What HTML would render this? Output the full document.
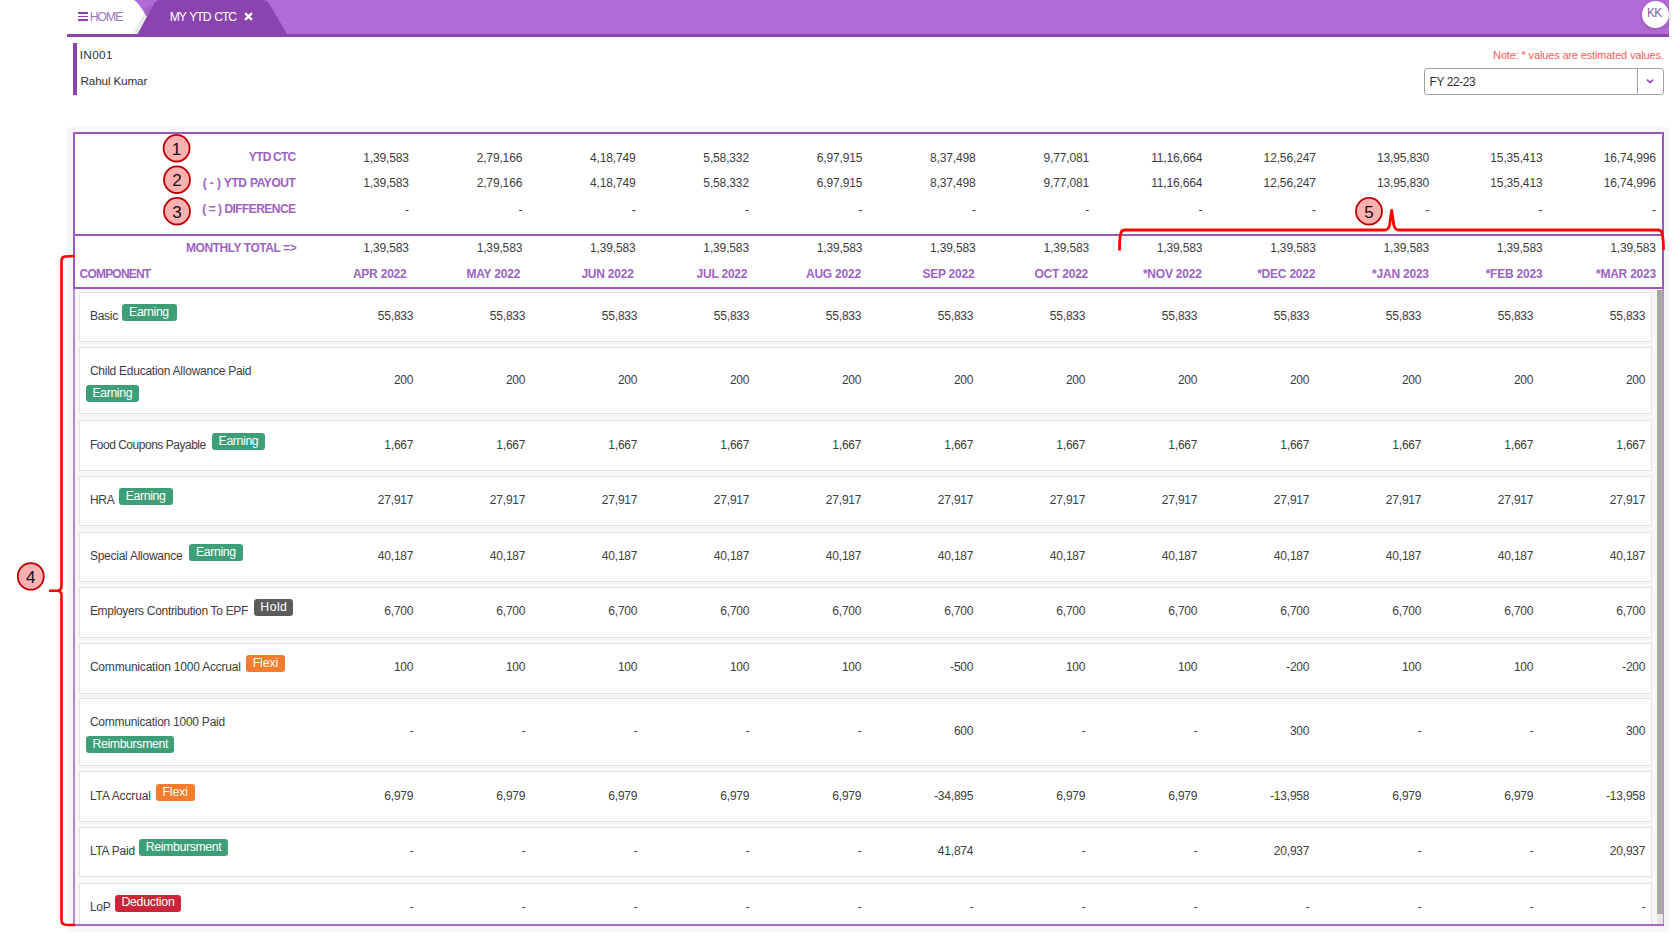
<!DOCTYPE html><html><head><meta charset="utf-8"><style>
html,body{margin:0;padding:0;width:1680px;height:945px;overflow:hidden;background:#fff;}
body{position:relative;font-family:"Liberation Sans", sans-serif;}
.t{position:absolute;white-space:nowrap;}
.a{position:absolute;}
</style></head><body>
<div class="a" style="left:67px;top:0;width:1602px;height:34px;background:#b26bd6;"></div>
<div class="a" style="left:67px;top:34px;width:1602px;height:3px;background:#8b44ae;"></div>
<svg class="a" style="left:0;top:0" width="1680" height="40"><defs><linearGradient id="sh" x1="0" x2="1"><stop offset="0" stop-color="#000" stop-opacity="0"/><stop offset="1" stop-color="#000" stop-opacity="0.12"/></linearGradient></defs><path d="M67,0 L134,0 Q138,2 147,17 L157,34 L67,34 Z" fill="#fff"/><filter id="bl" x="-50%" y="-50%" width="200%" height="200%"><feGaussianBlur stdDeviation="1.6"/></filter><path d="M136,34 L151,6 L149,6 L134,34 Z" fill="#000" fill-opacity="0.22" filter="url(#bl)"/><path d="M137.5,34 L154,3.5 Q156,0 160,0 L263,0 Q267,0 269,3.5 L287,34 Z" fill="#8b44ae"/></svg>
<div class="a" style="left:78px;top:12.2px;width:10px;height:1.6px;background:#8b44ae;"></div>
<div class="a" style="left:78px;top:15.7px;width:10px;height:1.6px;background:#8b44ae;"></div>
<div class="a" style="left:78px;top:19.3px;width:10px;height:1.6px;background:#8b44ae;"></div>
<div class="t" style="left:89.70px;top:11.17px;font-size:12.2px;line-height:12.2px;color:#9a76bf;font-weight:normal;letter-spacing:-0.95px;">HOME</div>
<div class="t" style="left:169.80px;top:11.07px;font-size:12.2px;line-height:12.2px;color:#fff;font-weight:normal;letter-spacing:-1.1px;word-spacing:1.6px;">MY YTD CTC</div>
<svg class="a" style="left:243.5px;top:12px" width="10" height="10"><path d="M1.8,1.8 L7.2,7.2 M7.2,1.8 L1.8,7.2" stroke="#fff" stroke-width="2.4" stroke-linecap="round"/></svg>
<div class="a" style="left:1641.5px;top:0.5px;width:27.5px;height:27.5px;border-radius:50%;background:#fff;box-shadow:0 1px 4px rgba(80,20,110,0.35);"></div>
<div class="t" style="left:1647.00px;top:7.44px;font-size:12px;line-height:12px;color:#8a5aa8;font-weight:normal;letter-spacing:-0.8px;">KK</div>
<div class="a" style="left:73px;top:43px;width:4px;height:52px;background:#8b44ae;"></div>
<div class="t" style="left:79.80px;top:49.51px;font-size:11.8px;line-height:11.8px;color:#333;font-weight:normal;letter-spacing:0.3px;">IN001</div>
<div class="t" style="left:80.50px;top:76.31px;font-size:11.8px;line-height:11.8px;color:#333;font-weight:normal;letter-spacing:-0.2px;">Rahul Kumar</div>
<div class="t" style="right:16.20px;top:49.69px;font-size:11px;line-height:11px;color:#ff5a5a;font-weight:normal;letter-spacing:-0.15px;">Note: * values are estimated values.</div>
<div class="a" style="left:1424px;top:68px;width:238px;height:25px;border:1px solid #a0a0a0;border-radius:3px;background:#fff;"></div>
<div class="a" style="left:1637px;top:69px;width:1px;height:25px;background:#a0a0a0;"></div>
<svg class="a" style="left:1645px;top:78px" width="10" height="7"><path d="M2,1.6 L5,4.6 L8,1.6" stroke="#9550bf" stroke-width="1.7" fill="none"/></svg>
<div class="t" style="left:1429.60px;top:75.54px;font-size:12px;line-height:12px;color:#333;font-weight:normal;letter-spacing:-0.45px;">FY 22-23</div>
<div class="a" style="left:67px;top:126.5px;width:1602px;height:805px;background:#f7f7f7;"></div>
<div class="a" style="left:73px;top:132px;width:1591px;height:157px;background:#fff;"></div>
<div class="a" style="left:73px;top:132px;width:1591px;height:2px;background:#9b59c0;"></div>
<div class="a" style="left:73px;top:132px;width:2px;height:157px;background:#9b59c0;"></div>
<div class="a" style="left:1662px;top:132px;width:2px;height:157px;background:#9b59c0;"></div>
<div class="a" style="left:73px;top:233.5px;width:1591px;height:2px;background:#9b59c0;"></div>
<div class="a" style="left:73px;top:287px;width:1591px;height:2px;background:#9b59c0;"></div>
<div class="a" style="left:73px;top:289px;width:1.6px;height:637px;background:#b58ad2;"></div>
<div class="a" style="left:1662.4px;top:289px;width:1.6px;height:637px;background:#b58ad2;"></div>
<div class="a" style="left:73px;top:924.4px;width:1591px;height:1.6px;background:#a76ac9;"></div>
<div class="t" style="right:1384.60px;top:151.04px;font-size:12px;line-height:12px;color:#9d62c2;font-weight:bold;letter-spacing:-0.78px;word-spacing:0px;">YTD CTC</div>
<div class="t" style="right:1384.60px;top:176.94px;font-size:12px;line-height:12px;color:#9d62c2;font-weight:bold;letter-spacing:-0.45px;word-spacing:0.7px;">( - ) YTD PAYOUT</div>
<div class="t" style="right:1384.60px;top:202.84px;font-size:12px;line-height:12px;color:#9d62c2;font-weight:bold;letter-spacing:-0.58px;word-spacing:0.25px;">( = ) DIFFERENCE</div>
<div class="t" style="right:1383.80px;top:241.94px;font-size:12px;line-height:12px;color:#9d62c2;font-weight:bold;letter-spacing:-0.45px;">MONTHLY TOTAL =&gt;</div>
<div class="t" style="left:79.50px;top:267.74px;font-size:12px;line-height:12px;color:#9d62c2;font-weight:bold;letter-spacing:-0.79px;">COMPONENT</div>
<div class="t" style="right:1271.15px;top:151.54px;font-size:12px;line-height:12px;color:#3d3d3d;font-weight:normal;letter-spacing:-0.14px;">1,39,583</div>
<div class="t" style="right:1271.15px;top:177.44px;font-size:12px;line-height:12px;color:#3d3d3d;font-weight:normal;letter-spacing:-0.14px;">1,39,583</div>
<div class="t" style="right:1271.00px;top:203.84px;font-size:12px;line-height:12px;color:#3d3d3d;font-weight:normal;letter-spacing:0px;">-</div>
<div class="t" style="right:1271.15px;top:242.14px;font-size:12px;line-height:12px;color:#3d3d3d;font-weight:normal;letter-spacing:-0.14px;">1,39,583</div>
<div class="t" style="right:1273.50px;top:267.84px;font-size:12px;line-height:12px;color:#9d62c2;font-weight:bold;letter-spacing:-0.22px;">APR 2022</div>
<div class="t" style="right:1157.79px;top:151.54px;font-size:12px;line-height:12px;color:#3d3d3d;font-weight:normal;letter-spacing:-0.14px;">2,79,166</div>
<div class="t" style="right:1157.79px;top:177.44px;font-size:12px;line-height:12px;color:#3d3d3d;font-weight:normal;letter-spacing:-0.14px;">2,79,166</div>
<div class="t" style="right:1157.64px;top:203.84px;font-size:12px;line-height:12px;color:#3d3d3d;font-weight:normal;letter-spacing:0px;">-</div>
<div class="t" style="right:1157.79px;top:242.14px;font-size:12px;line-height:12px;color:#3d3d3d;font-weight:normal;letter-spacing:-0.14px;">1,39,583</div>
<div class="t" style="right:1159.91px;top:267.84px;font-size:12px;line-height:12px;color:#9d62c2;font-weight:bold;letter-spacing:-0.22px;">MAY 2022</div>
<div class="t" style="right:1044.43px;top:151.54px;font-size:12px;line-height:12px;color:#3d3d3d;font-weight:normal;letter-spacing:-0.14px;">4,18,749</div>
<div class="t" style="right:1044.43px;top:177.44px;font-size:12px;line-height:12px;color:#3d3d3d;font-weight:normal;letter-spacing:-0.14px;">4,18,749</div>
<div class="t" style="right:1044.28px;top:203.84px;font-size:12px;line-height:12px;color:#3d3d3d;font-weight:normal;letter-spacing:0px;">-</div>
<div class="t" style="right:1044.43px;top:242.14px;font-size:12px;line-height:12px;color:#3d3d3d;font-weight:normal;letter-spacing:-0.14px;">1,39,583</div>
<div class="t" style="right:1046.32px;top:267.84px;font-size:12px;line-height:12px;color:#9d62c2;font-weight:bold;letter-spacing:-0.22px;">JUN 2022</div>
<div class="t" style="right:931.07px;top:151.54px;font-size:12px;line-height:12px;color:#3d3d3d;font-weight:normal;letter-spacing:-0.14px;">5,58,332</div>
<div class="t" style="right:931.07px;top:177.44px;font-size:12px;line-height:12px;color:#3d3d3d;font-weight:normal;letter-spacing:-0.14px;">5,58,332</div>
<div class="t" style="right:930.92px;top:203.84px;font-size:12px;line-height:12px;color:#3d3d3d;font-weight:normal;letter-spacing:0px;">-</div>
<div class="t" style="right:931.07px;top:242.14px;font-size:12px;line-height:12px;color:#3d3d3d;font-weight:normal;letter-spacing:-0.14px;">1,39,583</div>
<div class="t" style="right:932.73px;top:267.84px;font-size:12px;line-height:12px;color:#9d62c2;font-weight:bold;letter-spacing:-0.22px;">JUL 2022</div>
<div class="t" style="right:817.71px;top:151.54px;font-size:12px;line-height:12px;color:#3d3d3d;font-weight:normal;letter-spacing:-0.14px;">6,97,915</div>
<div class="t" style="right:817.71px;top:177.44px;font-size:12px;line-height:12px;color:#3d3d3d;font-weight:normal;letter-spacing:-0.14px;">6,97,915</div>
<div class="t" style="right:817.56px;top:203.84px;font-size:12px;line-height:12px;color:#3d3d3d;font-weight:normal;letter-spacing:0px;">-</div>
<div class="t" style="right:817.71px;top:242.14px;font-size:12px;line-height:12px;color:#3d3d3d;font-weight:normal;letter-spacing:-0.14px;">1,39,583</div>
<div class="t" style="right:819.14px;top:267.84px;font-size:12px;line-height:12px;color:#9d62c2;font-weight:bold;letter-spacing:-0.22px;">AUG 2022</div>
<div class="t" style="right:704.35px;top:151.54px;font-size:12px;line-height:12px;color:#3d3d3d;font-weight:normal;letter-spacing:-0.14px;">8,37,498</div>
<div class="t" style="right:704.35px;top:177.44px;font-size:12px;line-height:12px;color:#3d3d3d;font-weight:normal;letter-spacing:-0.14px;">8,37,498</div>
<div class="t" style="right:704.20px;top:203.84px;font-size:12px;line-height:12px;color:#3d3d3d;font-weight:normal;letter-spacing:0px;">-</div>
<div class="t" style="right:704.35px;top:242.14px;font-size:12px;line-height:12px;color:#3d3d3d;font-weight:normal;letter-spacing:-0.14px;">1,39,583</div>
<div class="t" style="right:705.55px;top:267.84px;font-size:12px;line-height:12px;color:#9d62c2;font-weight:bold;letter-spacing:-0.22px;">SEP 2022</div>
<div class="t" style="right:590.99px;top:151.54px;font-size:12px;line-height:12px;color:#3d3d3d;font-weight:normal;letter-spacing:-0.14px;">9,77,081</div>
<div class="t" style="right:590.99px;top:177.44px;font-size:12px;line-height:12px;color:#3d3d3d;font-weight:normal;letter-spacing:-0.14px;">9,77,081</div>
<div class="t" style="right:590.84px;top:203.84px;font-size:12px;line-height:12px;color:#3d3d3d;font-weight:normal;letter-spacing:0px;">-</div>
<div class="t" style="right:590.99px;top:242.14px;font-size:12px;line-height:12px;color:#3d3d3d;font-weight:normal;letter-spacing:-0.14px;">1,39,583</div>
<div class="t" style="right:591.96px;top:267.84px;font-size:12px;line-height:12px;color:#9d62c2;font-weight:bold;letter-spacing:-0.22px;">OCT 2022</div>
<div class="t" style="right:477.63px;top:151.54px;font-size:12px;line-height:12px;color:#3d3d3d;font-weight:normal;letter-spacing:-0.14px;">11,16,664</div>
<div class="t" style="right:477.63px;top:177.44px;font-size:12px;line-height:12px;color:#3d3d3d;font-weight:normal;letter-spacing:-0.14px;">11,16,664</div>
<div class="t" style="right:477.48px;top:203.84px;font-size:12px;line-height:12px;color:#3d3d3d;font-weight:normal;letter-spacing:0px;">-</div>
<div class="t" style="right:477.63px;top:242.14px;font-size:12px;line-height:12px;color:#3d3d3d;font-weight:normal;letter-spacing:-0.14px;">1,39,583</div>
<div class="t" style="right:478.37px;top:267.84px;font-size:12px;line-height:12px;color:#9d62c2;font-weight:bold;letter-spacing:-0.22px;">*NOV 2022</div>
<div class="t" style="right:364.27px;top:151.54px;font-size:12px;line-height:12px;color:#3d3d3d;font-weight:normal;letter-spacing:-0.14px;">12,56,247</div>
<div class="t" style="right:364.27px;top:177.44px;font-size:12px;line-height:12px;color:#3d3d3d;font-weight:normal;letter-spacing:-0.14px;">12,56,247</div>
<div class="t" style="right:364.12px;top:203.84px;font-size:12px;line-height:12px;color:#3d3d3d;font-weight:normal;letter-spacing:0px;">-</div>
<div class="t" style="right:364.27px;top:242.14px;font-size:12px;line-height:12px;color:#3d3d3d;font-weight:normal;letter-spacing:-0.14px;">1,39,583</div>
<div class="t" style="right:364.78px;top:267.84px;font-size:12px;line-height:12px;color:#9d62c2;font-weight:bold;letter-spacing:-0.22px;">*DEC 2022</div>
<div class="t" style="right:250.91px;top:151.54px;font-size:12px;line-height:12px;color:#3d3d3d;font-weight:normal;letter-spacing:-0.14px;">13,95,830</div>
<div class="t" style="right:250.91px;top:177.44px;font-size:12px;line-height:12px;color:#3d3d3d;font-weight:normal;letter-spacing:-0.14px;">13,95,830</div>
<div class="t" style="right:250.76px;top:203.84px;font-size:12px;line-height:12px;color:#3d3d3d;font-weight:normal;letter-spacing:0px;">-</div>
<div class="t" style="right:250.91px;top:242.14px;font-size:12px;line-height:12px;color:#3d3d3d;font-weight:normal;letter-spacing:-0.14px;">1,39,583</div>
<div class="t" style="right:251.19px;top:267.84px;font-size:12px;line-height:12px;color:#9d62c2;font-weight:bold;letter-spacing:-0.22px;">*JAN 2023</div>
<div class="t" style="right:137.55px;top:151.54px;font-size:12px;line-height:12px;color:#3d3d3d;font-weight:normal;letter-spacing:-0.14px;">15,35,413</div>
<div class="t" style="right:137.55px;top:177.44px;font-size:12px;line-height:12px;color:#3d3d3d;font-weight:normal;letter-spacing:-0.14px;">15,35,413</div>
<div class="t" style="right:137.40px;top:203.84px;font-size:12px;line-height:12px;color:#3d3d3d;font-weight:normal;letter-spacing:0px;">-</div>
<div class="t" style="right:137.55px;top:242.14px;font-size:12px;line-height:12px;color:#3d3d3d;font-weight:normal;letter-spacing:-0.14px;">1,39,583</div>
<div class="t" style="right:137.60px;top:267.84px;font-size:12px;line-height:12px;color:#9d62c2;font-weight:bold;letter-spacing:-0.22px;">*FEB 2023</div>
<div class="t" style="right:24.19px;top:151.54px;font-size:12px;line-height:12px;color:#3d3d3d;font-weight:normal;letter-spacing:-0.14px;">16,74,996</div>
<div class="t" style="right:24.19px;top:177.44px;font-size:12px;line-height:12px;color:#3d3d3d;font-weight:normal;letter-spacing:-0.14px;">16,74,996</div>
<div class="t" style="right:24.04px;top:203.84px;font-size:12px;line-height:12px;color:#3d3d3d;font-weight:normal;letter-spacing:0px;">-</div>
<div class="t" style="right:24.19px;top:242.14px;font-size:12px;line-height:12px;color:#3d3d3d;font-weight:normal;letter-spacing:-0.14px;">1,39,583</div>
<div class="t" style="right:24.01px;top:267.84px;font-size:12px;line-height:12px;color:#9d62c2;font-weight:bold;letter-spacing:-0.22px;">*MAR 2023</div>
<div class="a" style="left:1657px;top:290px;width:5.6px;height:624px;background:#a8a8a8;"></div>
<div class="a" style="left:1657px;top:914px;width:5.6px;height:10.4px;background:#e6e6e6;"></div>
<div class="a" style="left:79px;top:291.60px;width:1571px;height:48.45px;background:#fff;border:1px solid #e2e2e2;"></div>
<div class="t" style="left:89.90px;top:309.94px;font-size:12px;line-height:12px;color:#3d3d3d;font-weight:normal;letter-spacing:-0.25px;">Basic</div>
<div class="a" style="left:122.4px;top:303.70px;width:54.30px;height:17.3px;border-radius:3px;background:#3d9f77;"></div>
<div class="t" style="left:129.10px;top:305.69px;font-size:12.3px;line-height:12.3px;color:#fff;font-weight:normal;letter-spacing:-0.38px;">Earning</div>
<div class="t" style="right:1266.70px;top:309.94px;font-size:12px;line-height:12px;color:#3d3d3d;font-weight:normal;letter-spacing:-0.2px;">55,833</div>
<div class="t" style="right:1154.70px;top:309.94px;font-size:12px;line-height:12px;color:#3d3d3d;font-weight:normal;letter-spacing:-0.2px;">55,833</div>
<div class="t" style="right:1042.70px;top:309.94px;font-size:12px;line-height:12px;color:#3d3d3d;font-weight:normal;letter-spacing:-0.2px;">55,833</div>
<div class="t" style="right:930.70px;top:309.94px;font-size:12px;line-height:12px;color:#3d3d3d;font-weight:normal;letter-spacing:-0.2px;">55,833</div>
<div class="t" style="right:818.70px;top:309.94px;font-size:12px;line-height:12px;color:#3d3d3d;font-weight:normal;letter-spacing:-0.2px;">55,833</div>
<div class="t" style="right:706.70px;top:309.94px;font-size:12px;line-height:12px;color:#3d3d3d;font-weight:normal;letter-spacing:-0.2px;">55,833</div>
<div class="t" style="right:594.70px;top:309.94px;font-size:12px;line-height:12px;color:#3d3d3d;font-weight:normal;letter-spacing:-0.2px;">55,833</div>
<div class="t" style="right:482.70px;top:309.94px;font-size:12px;line-height:12px;color:#3d3d3d;font-weight:normal;letter-spacing:-0.2px;">55,833</div>
<div class="t" style="right:370.70px;top:309.94px;font-size:12px;line-height:12px;color:#3d3d3d;font-weight:normal;letter-spacing:-0.2px;">55,833</div>
<div class="t" style="right:258.70px;top:309.94px;font-size:12px;line-height:12px;color:#3d3d3d;font-weight:normal;letter-spacing:-0.2px;">55,833</div>
<div class="t" style="right:146.70px;top:309.94px;font-size:12px;line-height:12px;color:#3d3d3d;font-weight:normal;letter-spacing:-0.2px;">55,833</div>
<div class="t" style="right:34.70px;top:309.94px;font-size:12px;line-height:12px;color:#3d3d3d;font-weight:normal;letter-spacing:-0.2px;">55,833</div>
<div class="a" style="left:79px;top:347.10px;width:1571px;height:65.30px;background:#fff;border:1px solid #e2e2e2;"></div>
<div class="t" style="left:89.90px;top:364.94px;font-size:12px;line-height:12px;color:#3d3d3d;font-weight:normal;letter-spacing:-0.25px;">Child Education Allowance Paid</div>
<div class="a" style="left:85.7px;top:385.00px;width:53.30px;height:17.3px;border-radius:3px;background:#3d9f77;"></div>
<div class="t" style="left:92.40px;top:386.99px;font-size:12.3px;line-height:12.3px;color:#fff;font-weight:normal;letter-spacing:-0.38px;">Earning</div>
<div class="t" style="right:1266.70px;top:373.94px;font-size:12px;line-height:12px;color:#3d3d3d;font-weight:normal;letter-spacing:-0.2px;">200</div>
<div class="t" style="right:1154.70px;top:373.94px;font-size:12px;line-height:12px;color:#3d3d3d;font-weight:normal;letter-spacing:-0.2px;">200</div>
<div class="t" style="right:1042.70px;top:373.94px;font-size:12px;line-height:12px;color:#3d3d3d;font-weight:normal;letter-spacing:-0.2px;">200</div>
<div class="t" style="right:930.70px;top:373.94px;font-size:12px;line-height:12px;color:#3d3d3d;font-weight:normal;letter-spacing:-0.2px;">200</div>
<div class="t" style="right:818.70px;top:373.94px;font-size:12px;line-height:12px;color:#3d3d3d;font-weight:normal;letter-spacing:-0.2px;">200</div>
<div class="t" style="right:706.70px;top:373.94px;font-size:12px;line-height:12px;color:#3d3d3d;font-weight:normal;letter-spacing:-0.2px;">200</div>
<div class="t" style="right:594.70px;top:373.94px;font-size:12px;line-height:12px;color:#3d3d3d;font-weight:normal;letter-spacing:-0.2px;">200</div>
<div class="t" style="right:482.70px;top:373.94px;font-size:12px;line-height:12px;color:#3d3d3d;font-weight:normal;letter-spacing:-0.2px;">200</div>
<div class="t" style="right:370.70px;top:373.94px;font-size:12px;line-height:12px;color:#3d3d3d;font-weight:normal;letter-spacing:-0.2px;">200</div>
<div class="t" style="right:258.70px;top:373.94px;font-size:12px;line-height:12px;color:#3d3d3d;font-weight:normal;letter-spacing:-0.2px;">200</div>
<div class="t" style="right:146.70px;top:373.94px;font-size:12px;line-height:12px;color:#3d3d3d;font-weight:normal;letter-spacing:-0.2px;">200</div>
<div class="t" style="right:34.70px;top:373.94px;font-size:12px;line-height:12px;color:#3d3d3d;font-weight:normal;letter-spacing:-0.2px;">200</div>
<div class="a" style="left:79px;top:420.40px;width:1571px;height:48.45px;background:#fff;border:1px solid #e2e2e2;"></div>
<div class="t" style="left:89.90px;top:438.94px;font-size:12px;line-height:12px;color:#3d3d3d;font-weight:normal;letter-spacing:-0.48px;">Food Coupons Payable</div>
<div class="a" style="left:211.9px;top:432.70px;width:53.10px;height:17.3px;border-radius:3px;background:#3d9f77;"></div>
<div class="t" style="left:218.60px;top:434.69px;font-size:12.3px;line-height:12.3px;color:#fff;font-weight:normal;letter-spacing:-0.38px;">Earning</div>
<div class="t" style="right:1266.70px;top:438.94px;font-size:12px;line-height:12px;color:#3d3d3d;font-weight:normal;letter-spacing:-0.2px;">1,667</div>
<div class="t" style="right:1154.70px;top:438.94px;font-size:12px;line-height:12px;color:#3d3d3d;font-weight:normal;letter-spacing:-0.2px;">1,667</div>
<div class="t" style="right:1042.70px;top:438.94px;font-size:12px;line-height:12px;color:#3d3d3d;font-weight:normal;letter-spacing:-0.2px;">1,667</div>
<div class="t" style="right:930.70px;top:438.94px;font-size:12px;line-height:12px;color:#3d3d3d;font-weight:normal;letter-spacing:-0.2px;">1,667</div>
<div class="t" style="right:818.70px;top:438.94px;font-size:12px;line-height:12px;color:#3d3d3d;font-weight:normal;letter-spacing:-0.2px;">1,667</div>
<div class="t" style="right:706.70px;top:438.94px;font-size:12px;line-height:12px;color:#3d3d3d;font-weight:normal;letter-spacing:-0.2px;">1,667</div>
<div class="t" style="right:594.70px;top:438.94px;font-size:12px;line-height:12px;color:#3d3d3d;font-weight:normal;letter-spacing:-0.2px;">1,667</div>
<div class="t" style="right:482.70px;top:438.94px;font-size:12px;line-height:12px;color:#3d3d3d;font-weight:normal;letter-spacing:-0.2px;">1,667</div>
<div class="t" style="right:370.70px;top:438.94px;font-size:12px;line-height:12px;color:#3d3d3d;font-weight:normal;letter-spacing:-0.2px;">1,667</div>
<div class="t" style="right:258.70px;top:438.94px;font-size:12px;line-height:12px;color:#3d3d3d;font-weight:normal;letter-spacing:-0.2px;">1,667</div>
<div class="t" style="right:146.70px;top:438.94px;font-size:12px;line-height:12px;color:#3d3d3d;font-weight:normal;letter-spacing:-0.2px;">1,667</div>
<div class="t" style="right:34.70px;top:438.94px;font-size:12px;line-height:12px;color:#3d3d3d;font-weight:normal;letter-spacing:-0.2px;">1,667</div>
<div class="a" style="left:79px;top:475.90px;width:1571px;height:48.45px;background:#fff;border:1px solid #e2e2e2;"></div>
<div class="t" style="left:89.90px;top:493.94px;font-size:12px;line-height:12px;color:#3d3d3d;font-weight:normal;letter-spacing:-0.25px;">HRA</div>
<div class="a" style="left:119px;top:487.70px;width:54.00px;height:17.3px;border-radius:3px;background:#3d9f77;"></div>
<div class="t" style="left:125.70px;top:489.69px;font-size:12.3px;line-height:12.3px;color:#fff;font-weight:normal;letter-spacing:-0.38px;">Earning</div>
<div class="t" style="right:1266.70px;top:493.94px;font-size:12px;line-height:12px;color:#3d3d3d;font-weight:normal;letter-spacing:-0.2px;">27,917</div>
<div class="t" style="right:1154.70px;top:493.94px;font-size:12px;line-height:12px;color:#3d3d3d;font-weight:normal;letter-spacing:-0.2px;">27,917</div>
<div class="t" style="right:1042.70px;top:493.94px;font-size:12px;line-height:12px;color:#3d3d3d;font-weight:normal;letter-spacing:-0.2px;">27,917</div>
<div class="t" style="right:930.70px;top:493.94px;font-size:12px;line-height:12px;color:#3d3d3d;font-weight:normal;letter-spacing:-0.2px;">27,917</div>
<div class="t" style="right:818.70px;top:493.94px;font-size:12px;line-height:12px;color:#3d3d3d;font-weight:normal;letter-spacing:-0.2px;">27,917</div>
<div class="t" style="right:706.70px;top:493.94px;font-size:12px;line-height:12px;color:#3d3d3d;font-weight:normal;letter-spacing:-0.2px;">27,917</div>
<div class="t" style="right:594.70px;top:493.94px;font-size:12px;line-height:12px;color:#3d3d3d;font-weight:normal;letter-spacing:-0.2px;">27,917</div>
<div class="t" style="right:482.70px;top:493.94px;font-size:12px;line-height:12px;color:#3d3d3d;font-weight:normal;letter-spacing:-0.2px;">27,917</div>
<div class="t" style="right:370.70px;top:493.94px;font-size:12px;line-height:12px;color:#3d3d3d;font-weight:normal;letter-spacing:-0.2px;">27,917</div>
<div class="t" style="right:258.70px;top:493.94px;font-size:12px;line-height:12px;color:#3d3d3d;font-weight:normal;letter-spacing:-0.2px;">27,917</div>
<div class="t" style="right:146.70px;top:493.94px;font-size:12px;line-height:12px;color:#3d3d3d;font-weight:normal;letter-spacing:-0.2px;">27,917</div>
<div class="t" style="right:34.70px;top:493.94px;font-size:12px;line-height:12px;color:#3d3d3d;font-weight:normal;letter-spacing:-0.2px;">27,917</div>
<div class="a" style="left:79px;top:531.60px;width:1571px;height:48.45px;background:#fff;border:1px solid #e2e2e2;"></div>
<div class="t" style="left:89.90px;top:549.84px;font-size:12px;line-height:12px;color:#3d3d3d;font-weight:normal;letter-spacing:-0.25px;">Special Allowance</div>
<div class="a" style="left:189.3px;top:543.60px;width:53.80px;height:17.3px;border-radius:3px;background:#3d9f77;"></div>
<div class="t" style="left:196.00px;top:545.59px;font-size:12.3px;line-height:12.3px;color:#fff;font-weight:normal;letter-spacing:-0.38px;">Earning</div>
<div class="t" style="right:1266.70px;top:549.84px;font-size:12px;line-height:12px;color:#3d3d3d;font-weight:normal;letter-spacing:-0.2px;">40,187</div>
<div class="t" style="right:1154.70px;top:549.84px;font-size:12px;line-height:12px;color:#3d3d3d;font-weight:normal;letter-spacing:-0.2px;">40,187</div>
<div class="t" style="right:1042.70px;top:549.84px;font-size:12px;line-height:12px;color:#3d3d3d;font-weight:normal;letter-spacing:-0.2px;">40,187</div>
<div class="t" style="right:930.70px;top:549.84px;font-size:12px;line-height:12px;color:#3d3d3d;font-weight:normal;letter-spacing:-0.2px;">40,187</div>
<div class="t" style="right:818.70px;top:549.84px;font-size:12px;line-height:12px;color:#3d3d3d;font-weight:normal;letter-spacing:-0.2px;">40,187</div>
<div class="t" style="right:706.70px;top:549.84px;font-size:12px;line-height:12px;color:#3d3d3d;font-weight:normal;letter-spacing:-0.2px;">40,187</div>
<div class="t" style="right:594.70px;top:549.84px;font-size:12px;line-height:12px;color:#3d3d3d;font-weight:normal;letter-spacing:-0.2px;">40,187</div>
<div class="t" style="right:482.70px;top:549.84px;font-size:12px;line-height:12px;color:#3d3d3d;font-weight:normal;letter-spacing:-0.2px;">40,187</div>
<div class="t" style="right:370.70px;top:549.84px;font-size:12px;line-height:12px;color:#3d3d3d;font-weight:normal;letter-spacing:-0.2px;">40,187</div>
<div class="t" style="right:258.70px;top:549.84px;font-size:12px;line-height:12px;color:#3d3d3d;font-weight:normal;letter-spacing:-0.2px;">40,187</div>
<div class="t" style="right:146.70px;top:549.84px;font-size:12px;line-height:12px;color:#3d3d3d;font-weight:normal;letter-spacing:-0.2px;">40,187</div>
<div class="t" style="right:34.70px;top:549.84px;font-size:12px;line-height:12px;color:#3d3d3d;font-weight:normal;letter-spacing:-0.2px;">40,187</div>
<div class="a" style="left:79px;top:587.10px;width:1571px;height:48.45px;background:#fff;border:1px solid #e2e2e2;"></div>
<div class="t" style="left:89.90px;top:604.94px;font-size:12px;line-height:12px;color:#3d3d3d;font-weight:normal;letter-spacing:-0.31px;">Employers Contribution To EPF</div>
<div class="a" style="left:253.6px;top:598.70px;width:39.50px;height:17.3px;border-radius:3px;background:#5c5c5c;"></div>
<div class="t" style="left:260.30px;top:600.69px;font-size:12.3px;line-height:12.3px;color:#fff;font-weight:normal;letter-spacing:0.45px;">Hold</div>
<div class="t" style="right:1266.70px;top:604.94px;font-size:12px;line-height:12px;color:#3d3d3d;font-weight:normal;letter-spacing:-0.2px;">6,700</div>
<div class="t" style="right:1154.70px;top:604.94px;font-size:12px;line-height:12px;color:#3d3d3d;font-weight:normal;letter-spacing:-0.2px;">6,700</div>
<div class="t" style="right:1042.70px;top:604.94px;font-size:12px;line-height:12px;color:#3d3d3d;font-weight:normal;letter-spacing:-0.2px;">6,700</div>
<div class="t" style="right:930.70px;top:604.94px;font-size:12px;line-height:12px;color:#3d3d3d;font-weight:normal;letter-spacing:-0.2px;">6,700</div>
<div class="t" style="right:818.70px;top:604.94px;font-size:12px;line-height:12px;color:#3d3d3d;font-weight:normal;letter-spacing:-0.2px;">6,700</div>
<div class="t" style="right:706.70px;top:604.94px;font-size:12px;line-height:12px;color:#3d3d3d;font-weight:normal;letter-spacing:-0.2px;">6,700</div>
<div class="t" style="right:594.70px;top:604.94px;font-size:12px;line-height:12px;color:#3d3d3d;font-weight:normal;letter-spacing:-0.2px;">6,700</div>
<div class="t" style="right:482.70px;top:604.94px;font-size:12px;line-height:12px;color:#3d3d3d;font-weight:normal;letter-spacing:-0.2px;">6,700</div>
<div class="t" style="right:370.70px;top:604.94px;font-size:12px;line-height:12px;color:#3d3d3d;font-weight:normal;letter-spacing:-0.2px;">6,700</div>
<div class="t" style="right:258.70px;top:604.94px;font-size:12px;line-height:12px;color:#3d3d3d;font-weight:normal;letter-spacing:-0.2px;">6,700</div>
<div class="t" style="right:146.70px;top:604.94px;font-size:12px;line-height:12px;color:#3d3d3d;font-weight:normal;letter-spacing:-0.2px;">6,700</div>
<div class="t" style="right:34.70px;top:604.94px;font-size:12px;line-height:12px;color:#3d3d3d;font-weight:normal;letter-spacing:-0.2px;">6,700</div>
<div class="a" style="left:79px;top:643.10px;width:1571px;height:48.45px;background:#fff;border:1px solid #e2e2e2;"></div>
<div class="t" style="left:89.90px;top:661.04px;font-size:12px;line-height:12px;color:#3d3d3d;font-weight:normal;letter-spacing:-0.2px;">Communication 1000 Accrual</div>
<div class="a" style="left:246px;top:654.80px;width:39.00px;height:17.3px;border-radius:3px;background:#f47c2c;"></div>
<div class="t" style="left:252.70px;top:656.79px;font-size:12.3px;line-height:12.3px;color:#fff;font-weight:normal;letter-spacing:-0.1px;">Flexi</div>
<div class="t" style="right:1266.70px;top:661.04px;font-size:12px;line-height:12px;color:#3d3d3d;font-weight:normal;letter-spacing:-0.2px;">100</div>
<div class="t" style="right:1154.70px;top:661.04px;font-size:12px;line-height:12px;color:#3d3d3d;font-weight:normal;letter-spacing:-0.2px;">100</div>
<div class="t" style="right:1042.70px;top:661.04px;font-size:12px;line-height:12px;color:#3d3d3d;font-weight:normal;letter-spacing:-0.2px;">100</div>
<div class="t" style="right:930.70px;top:661.04px;font-size:12px;line-height:12px;color:#3d3d3d;font-weight:normal;letter-spacing:-0.2px;">100</div>
<div class="t" style="right:818.70px;top:661.04px;font-size:12px;line-height:12px;color:#3d3d3d;font-weight:normal;letter-spacing:-0.2px;">100</div>
<div class="t" style="right:706.70px;top:661.04px;font-size:12px;line-height:12px;color:#3d3d3d;font-weight:normal;letter-spacing:-0.2px;">-500</div>
<div class="t" style="right:594.70px;top:661.04px;font-size:12px;line-height:12px;color:#3d3d3d;font-weight:normal;letter-spacing:-0.2px;">100</div>
<div class="t" style="right:482.70px;top:661.04px;font-size:12px;line-height:12px;color:#3d3d3d;font-weight:normal;letter-spacing:-0.2px;">100</div>
<div class="t" style="right:370.70px;top:661.04px;font-size:12px;line-height:12px;color:#3d3d3d;font-weight:normal;letter-spacing:-0.2px;">-200</div>
<div class="t" style="right:258.70px;top:661.04px;font-size:12px;line-height:12px;color:#3d3d3d;font-weight:normal;letter-spacing:-0.2px;">100</div>
<div class="t" style="right:146.70px;top:661.04px;font-size:12px;line-height:12px;color:#3d3d3d;font-weight:normal;letter-spacing:-0.2px;">100</div>
<div class="t" style="right:34.70px;top:661.04px;font-size:12px;line-height:12px;color:#3d3d3d;font-weight:normal;letter-spacing:-0.2px;">-200</div>
<div class="a" style="left:79px;top:698.30px;width:1571px;height:65.30px;background:#fff;border:1px solid #e2e2e2;"></div>
<div class="t" style="left:89.90px;top:715.94px;font-size:12px;line-height:12px;color:#3d3d3d;font-weight:normal;letter-spacing:-0.25px;">Communication 1000 Paid</div>
<div class="a" style="left:85.7px;top:736.00px;width:88.30px;height:17.3px;border-radius:3px;background:#3d9f77;"></div>
<div class="t" style="left:92.40px;top:737.99px;font-size:12.3px;line-height:12.3px;color:#fff;font-weight:normal;letter-spacing:-0.36px;">Reimbursment</div>
<div class="t" style="right:1266.70px;top:725.34px;font-size:12px;line-height:12px;color:#3d3d3d;font-weight:normal;letter-spacing:-0.2px;">-</div>
<div class="t" style="right:1154.70px;top:725.34px;font-size:12px;line-height:12px;color:#3d3d3d;font-weight:normal;letter-spacing:-0.2px;">-</div>
<div class="t" style="right:1042.70px;top:725.34px;font-size:12px;line-height:12px;color:#3d3d3d;font-weight:normal;letter-spacing:-0.2px;">-</div>
<div class="t" style="right:930.70px;top:725.34px;font-size:12px;line-height:12px;color:#3d3d3d;font-weight:normal;letter-spacing:-0.2px;">-</div>
<div class="t" style="right:818.70px;top:725.34px;font-size:12px;line-height:12px;color:#3d3d3d;font-weight:normal;letter-spacing:-0.2px;">-</div>
<div class="t" style="right:706.70px;top:724.94px;font-size:12px;line-height:12px;color:#3d3d3d;font-weight:normal;letter-spacing:-0.2px;">600</div>
<div class="t" style="right:594.70px;top:725.34px;font-size:12px;line-height:12px;color:#3d3d3d;font-weight:normal;letter-spacing:-0.2px;">-</div>
<div class="t" style="right:482.70px;top:725.34px;font-size:12px;line-height:12px;color:#3d3d3d;font-weight:normal;letter-spacing:-0.2px;">-</div>
<div class="t" style="right:370.70px;top:724.94px;font-size:12px;line-height:12px;color:#3d3d3d;font-weight:normal;letter-spacing:-0.2px;">300</div>
<div class="t" style="right:258.70px;top:725.34px;font-size:12px;line-height:12px;color:#3d3d3d;font-weight:normal;letter-spacing:-0.2px;">-</div>
<div class="t" style="right:146.70px;top:725.34px;font-size:12px;line-height:12px;color:#3d3d3d;font-weight:normal;letter-spacing:-0.2px;">-</div>
<div class="t" style="right:34.70px;top:724.94px;font-size:12px;line-height:12px;color:#3d3d3d;font-weight:normal;letter-spacing:-0.2px;">300</div>
<div class="a" style="left:79px;top:771.40px;width:1571px;height:48.45px;background:#fff;border:1px solid #e2e2e2;"></div>
<div class="t" style="left:89.90px;top:789.94px;font-size:12px;line-height:12px;color:#3d3d3d;font-weight:normal;letter-spacing:-0.11px;">LTA Accrual</div>
<div class="a" style="left:155.7px;top:783.70px;width:39.30px;height:17.3px;border-radius:3px;background:#f47c2c;"></div>
<div class="t" style="left:162.40px;top:785.69px;font-size:12.3px;line-height:12.3px;color:#fff;font-weight:normal;letter-spacing:-0.1px;">Flexi</div>
<div class="t" style="right:1266.70px;top:789.94px;font-size:12px;line-height:12px;color:#3d3d3d;font-weight:normal;letter-spacing:-0.2px;">6,979</div>
<div class="t" style="right:1154.70px;top:789.94px;font-size:12px;line-height:12px;color:#3d3d3d;font-weight:normal;letter-spacing:-0.2px;">6,979</div>
<div class="t" style="right:1042.70px;top:789.94px;font-size:12px;line-height:12px;color:#3d3d3d;font-weight:normal;letter-spacing:-0.2px;">6,979</div>
<div class="t" style="right:930.70px;top:789.94px;font-size:12px;line-height:12px;color:#3d3d3d;font-weight:normal;letter-spacing:-0.2px;">6,979</div>
<div class="t" style="right:818.70px;top:789.94px;font-size:12px;line-height:12px;color:#3d3d3d;font-weight:normal;letter-spacing:-0.2px;">6,979</div>
<div class="t" style="right:706.70px;top:789.94px;font-size:12px;line-height:12px;color:#3d3d3d;font-weight:normal;letter-spacing:-0.2px;">-34,895</div>
<div class="t" style="right:594.70px;top:789.94px;font-size:12px;line-height:12px;color:#3d3d3d;font-weight:normal;letter-spacing:-0.2px;">6,979</div>
<div class="t" style="right:482.70px;top:789.94px;font-size:12px;line-height:12px;color:#3d3d3d;font-weight:normal;letter-spacing:-0.2px;">6,979</div>
<div class="t" style="right:370.70px;top:789.94px;font-size:12px;line-height:12px;color:#3d3d3d;font-weight:normal;letter-spacing:-0.2px;">-13,958</div>
<div class="t" style="right:258.70px;top:789.94px;font-size:12px;line-height:12px;color:#3d3d3d;font-weight:normal;letter-spacing:-0.2px;">6,979</div>
<div class="t" style="right:146.70px;top:789.94px;font-size:12px;line-height:12px;color:#3d3d3d;font-weight:normal;letter-spacing:-0.2px;">6,979</div>
<div class="t" style="right:34.70px;top:789.94px;font-size:12px;line-height:12px;color:#3d3d3d;font-weight:normal;letter-spacing:-0.2px;">-13,958</div>
<div class="a" style="left:79px;top:827.00px;width:1571px;height:48.45px;background:#fff;border:1px solid #e2e2e2;"></div>
<div class="t" style="left:89.90px;top:845.04px;font-size:12px;line-height:12px;color:#3d3d3d;font-weight:normal;letter-spacing:-0.25px;">LTA Paid</div>
<div class="a" style="left:139px;top:838.80px;width:89.30px;height:17.3px;border-radius:3px;background:#3d9f77;"></div>
<div class="t" style="left:145.70px;top:840.79px;font-size:12.3px;line-height:12.3px;color:#fff;font-weight:normal;letter-spacing:-0.36px;">Reimbursment</div>
<div class="t" style="right:1266.70px;top:845.44px;font-size:12px;line-height:12px;color:#3d3d3d;font-weight:normal;letter-spacing:-0.2px;">-</div>
<div class="t" style="right:1154.70px;top:845.44px;font-size:12px;line-height:12px;color:#3d3d3d;font-weight:normal;letter-spacing:-0.2px;">-</div>
<div class="t" style="right:1042.70px;top:845.44px;font-size:12px;line-height:12px;color:#3d3d3d;font-weight:normal;letter-spacing:-0.2px;">-</div>
<div class="t" style="right:930.70px;top:845.44px;font-size:12px;line-height:12px;color:#3d3d3d;font-weight:normal;letter-spacing:-0.2px;">-</div>
<div class="t" style="right:818.70px;top:845.44px;font-size:12px;line-height:12px;color:#3d3d3d;font-weight:normal;letter-spacing:-0.2px;">-</div>
<div class="t" style="right:706.70px;top:845.04px;font-size:12px;line-height:12px;color:#3d3d3d;font-weight:normal;letter-spacing:-0.2px;">41,874</div>
<div class="t" style="right:594.70px;top:845.44px;font-size:12px;line-height:12px;color:#3d3d3d;font-weight:normal;letter-spacing:-0.2px;">-</div>
<div class="t" style="right:482.70px;top:845.44px;font-size:12px;line-height:12px;color:#3d3d3d;font-weight:normal;letter-spacing:-0.2px;">-</div>
<div class="t" style="right:370.70px;top:845.04px;font-size:12px;line-height:12px;color:#3d3d3d;font-weight:normal;letter-spacing:-0.2px;">20,937</div>
<div class="t" style="right:258.70px;top:845.44px;font-size:12px;line-height:12px;color:#3d3d3d;font-weight:normal;letter-spacing:-0.2px;">-</div>
<div class="t" style="right:146.70px;top:845.44px;font-size:12px;line-height:12px;color:#3d3d3d;font-weight:normal;letter-spacing:-0.2px;">-</div>
<div class="t" style="right:34.70px;top:845.04px;font-size:12px;line-height:12px;color:#3d3d3d;font-weight:normal;letter-spacing:-0.2px;">20,937</div>
<div class="a" style="left:79px;top:882.70px;width:1571px;height:40.70px;background:#fff;border:1px solid #e2e2e2;border-bottom:0;"></div>
<div class="t" style="left:89.90px;top:900.74px;font-size:12px;line-height:12px;color:#3d3d3d;font-weight:normal;letter-spacing:-0.25px;">LoP</div>
<div class="a" style="left:114.7px;top:894.50px;width:66.70px;height:17.3px;border-radius:3px;background:#cc2438;"></div>
<div class="t" style="left:121.40px;top:896.49px;font-size:12.3px;line-height:12.3px;color:#fff;font-weight:normal;letter-spacing:-0.25px;">Deduction</div>
<div class="t" style="right:1266.70px;top:901.14px;font-size:12px;line-height:12px;color:#3d3d3d;font-weight:normal;letter-spacing:-0.2px;">-</div>
<div class="t" style="right:1154.70px;top:901.14px;font-size:12px;line-height:12px;color:#3d3d3d;font-weight:normal;letter-spacing:-0.2px;">-</div>
<div class="t" style="right:1042.70px;top:901.14px;font-size:12px;line-height:12px;color:#3d3d3d;font-weight:normal;letter-spacing:-0.2px;">-</div>
<div class="t" style="right:930.70px;top:901.14px;font-size:12px;line-height:12px;color:#3d3d3d;font-weight:normal;letter-spacing:-0.2px;">-</div>
<div class="t" style="right:818.70px;top:901.14px;font-size:12px;line-height:12px;color:#3d3d3d;font-weight:normal;letter-spacing:-0.2px;">-</div>
<div class="t" style="right:706.70px;top:901.14px;font-size:12px;line-height:12px;color:#3d3d3d;font-weight:normal;letter-spacing:-0.2px;">-</div>
<div class="t" style="right:594.70px;top:901.14px;font-size:12px;line-height:12px;color:#3d3d3d;font-weight:normal;letter-spacing:-0.2px;">-</div>
<div class="t" style="right:482.70px;top:901.14px;font-size:12px;line-height:12px;color:#3d3d3d;font-weight:normal;letter-spacing:-0.2px;">-</div>
<div class="t" style="right:370.70px;top:901.14px;font-size:12px;line-height:12px;color:#3d3d3d;font-weight:normal;letter-spacing:-0.2px;">-</div>
<div class="t" style="right:258.70px;top:901.14px;font-size:12px;line-height:12px;color:#3d3d3d;font-weight:normal;letter-spacing:-0.2px;">-</div>
<div class="t" style="right:146.70px;top:901.14px;font-size:12px;line-height:12px;color:#3d3d3d;font-weight:normal;letter-spacing:-0.2px;">-</div>
<div class="t" style="right:34.70px;top:901.14px;font-size:12px;line-height:12px;color:#3d3d3d;font-weight:normal;letter-spacing:-0.2px;">-</div>
<svg class="a" style="left:0;top:0" width="1680" height="945">
<path d="M75,256 L65,256.5 Q61.5,257 61.5,261 L61.5,586 Q61.5,590.7 57,590.7 L49,590.7 M57,590.7 Q61.5,590.7 61.5,595 L61.5,920 Q61.5,924.5 66,924.8 L75,925" stroke="#ff0000" stroke-width="2.6" fill="none"/>
<path d="M1119.5,250.5 Q1119.5,236 1121,232.5 Q1122,230 1125,230 L1384.5,230 Q1388.5,230 1389.6,225 L1391.7,210.5 L1393.8,225 Q1394.9,230 1398.9,230 L1658,230 Q1661,230 1662,233 Q1663.5,240 1663.5,250" stroke="#ff0000" stroke-width="2.8" fill="none" stroke-linejoin="round"/>
<ellipse cx="176.6" cy="148.2" rx="13" ry="13.3" fill="#ffb0b0" stroke="#c00000" stroke-width="1.8"/>
<text x="176.6" y="154.6" text-anchor="middle" font-family="Liberation Sans, sans-serif" font-size="17" fill="#111">1</text>
<ellipse cx="177" cy="179.7" rx="13" ry="13.3" fill="#ffb0b0" stroke="#c00000" stroke-width="1.8"/>
<text x="177" y="186.1" text-anchor="middle" font-family="Liberation Sans, sans-serif" font-size="17" fill="#111">2</text>
<ellipse cx="177" cy="211.2" rx="13" ry="13.3" fill="#ffb0b0" stroke="#c00000" stroke-width="1.8"/>
<text x="177" y="217.6" text-anchor="middle" font-family="Liberation Sans, sans-serif" font-size="17" fill="#111">3</text>
<ellipse cx="30.8" cy="576.4" rx="13" ry="13.3" fill="#ffb0b0" stroke="#c00000" stroke-width="1.8"/>
<text x="30.8" y="582.8" text-anchor="middle" font-family="Liberation Sans, sans-serif" font-size="17" fill="#111">4</text>
<ellipse cx="1369" cy="211.2" rx="13" ry="13.3" fill="#ffb0b0" stroke="#c00000" stroke-width="1.8"/>
<text x="1369" y="217.6" text-anchor="middle" font-family="Liberation Sans, sans-serif" font-size="17" fill="#111">5</text>
</svg>
</body></html>
